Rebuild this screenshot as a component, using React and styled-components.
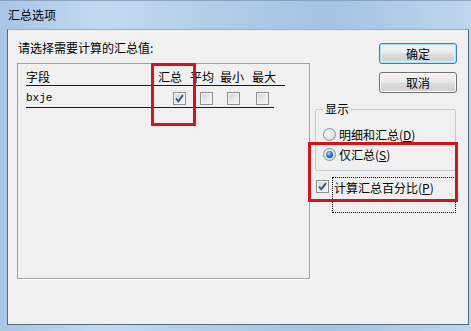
import React from 'react'
import styled, { createGlobalStyle } from 'styled-components'

const GlobalStyle = createGlobalStyle`
  html, body {
    margin: 0;
    padding: 0;
    overflow: hidden;
    background: #b7cfe9;
  }
  body {
    font-family: 'Noto Sans CJK SC', 'Noto Sans', sans-serif;
    font-size: 12px;
    color: #000;
  }
`

const Window = styled.div`
  position: relative;
  width: 471px;
  height: 331px;
  box-sizing: border-box;
  display: flex;
  flex-direction: column;
  border-top: 1px solid #8aa3c0;
  background: linear-gradient(90deg, #a8c5e5 0%, #c3d9f0 22%, #b2cce8 45%, #a5c2e3 70%, #bed5ee 100%);
`

const TitleBar = styled.div`
  height: 28px;
  padding: 6px 0 0 8px;
  box-sizing: border-box;
  line-height: 16px;
  font-size: 12px;
  color: #000;
`

const Client = styled.div`
  flex: 1;
  margin: 0 2px 6px 7px;
  box-sizing: border-box;
  display: flex;
  gap: 5px;
  padding: 10px 0 0 9px;
  background: #f0f0f0;
  border: 1px solid #55697f;
  border-top-color: #98aec6;
`

const LeftColumn = styled.div`
  width: 293px;
  display: flex;
  flex-direction: column;
`

const Prompt = styled.div`
  height: 16px;
  line-height: 16px;
  padding-left: 1px;
  margin-bottom: 7px;
`

const ListBox = styled.div`
  height: 216px;
  box-sizing: border-box;
  border: 1px solid #a0a0a0;
  box-shadow: 1px 1px 0 #ffffff;
  padding: 5px 0 0 8px;
`

const HeaderRow = styled.div`
  display: grid;
  grid-template-columns: 132px 32px 30px 32px 33px;
  width: 259px;
  height: 16px;
  line-height: 16px;
  border-bottom: 1px solid #1a1a1a;
`

const DataRow = styled.div`
  display: grid;
  grid-template-columns: 147px 27px 27px 29px 18px;
  align-items: center;
  width: 248px;
  height: 17px;
  padding-top: 4px;
  border-bottom: 1px solid #1a1a1a;
`

const FieldName = styled.span`
  font-family: 'Liberation Mono', 'DejaVu Sans Mono', monospace;
  font-size: 11px;
  line-height: 13px;
`

const RightColumn = styled.div`
  width: 142px;
  display: flex;
  flex-direction: column;
  align-items: flex-end;
`

const Button = styled.button`
  width: 78px;
  height: 21px;
  margin-top: ${(p) => p.$top}px;
  box-sizing: border-box;
  padding: 0;
  font-family: inherit;
  font-size: 12px;
  line-height: 18px;
  color: #000;
  border: 1px solid ${(p) => (p.$default ? '#3c7fb1' : '#707070')};
  border-radius: 3px;
  background: linear-gradient(#f2f2f2 0%, #ebebeb 48%, #dddddd 52%, #cfcfcf 100%);
  box-shadow: ${(p) =>
    p.$default ? 'inset 0 0 0 1px #a6e4fb, inset 0 0 0 2px #d8f2fc' : 'inset 0 0 0 1px #fbfbfb'};
`

const Group = styled.fieldset`
  align-self: flex-start;
  width: 141px;
  box-sizing: border-box;
  margin: 9px 0 0 0;
  padding: 0 0 6px 7px;
  border: 1px solid #c5cbd2;
  border-radius: 2px;
  min-width: 0;
`

const GroupTitle = styled.legend`
  padding: 0 2px;
  line-height: 14px;
`

const RadioRow = styled.label`
  display: flex;
  align-items: center;
  gap: 3px;
  height: 20px;
  margin-top: ${(p) => p.$top || 0}px;
`

const RadioDot = styled.span`
  width: 13px;
  height: 13px;
  box-sizing: border-box;
  border-radius: 50%;
  border: 1px solid #8e8f8f;
  background: radial-gradient(circle at 40% 40%, #fbfbfb 0%, #e3e3e3 60%, #cfcfcf 100%);
  display: flex;
  align-items: center;
  justify-content: center;

  &::after {
    content: '';
    display: ${(p) => (p.$on ? 'block' : 'none')};
    width: 7px;
    height: 7px;
    border-radius: 50%;
    background: radial-gradient(circle at 40% 35%, #bfe6ff 0%, #3c8ee0 35%, #124f9e 75%, #0a3777 100%);
  }
`

const Box = styled.span`
  width: 13px;
  height: 13px;
  flex: none;
  box-sizing: border-box;
  border: 1px solid #8e8f8f;
  background: linear-gradient(135deg, #cdd1d6 0%, #e9eaec 55%, #f7f7f7 100%);
  box-shadow: inset 0 0 0 1px #f4f4f4;
  display: flex;
  align-items: center;
  justify-content: center;
`

const PercentRow = styled.label`
  align-self: flex-start;
  display: flex;
  align-items: flex-start;
  margin: 6px 0 0 1px;
  padding-top: 3px;
`

const PercentText = styled.span`
  width: 124px;
  height: 36px;
  box-sizing: border-box;
  margin: -3px 0 0 3px;
  padding: 2px 1px;
  line-height: 16px;
  border: 1px dotted #000;
`

const Marker = styled.div`
  position: absolute;
  box-sizing: border-box;
  border: 3px solid #d0161c;
`

const Check = ({ on }) => (
  <Box>
    {on && (
      <svg width="9" height="9" viewBox="0 0 9 9">
        <path d="M1 4.6 L3.4 7.2 L8 1.2" fill="none" stroke="#3b4f8f" strokeWidth="1.9" />
      </svg>
    )}
  </Box>
)

const columns = ['汇总', '平均', '最小', '最大']

export default function App() {
  return (
    <>
      <GlobalStyle />
      <Window>
        <TitleBar>汇总选项</TitleBar>
        <Client>
          <LeftColumn>
            <Prompt>请选择需要计算的汇总值:</Prompt>
            <ListBox>
              <HeaderRow>
                <span>字段</span>
                {columns.map((c) => (
                  <span key={c}>{c}</span>
                ))}
              </HeaderRow>
              <DataRow>
                <FieldName>bxje</FieldName>
                <Check on />
                <Check />
                <Check />
                <Check />
              </DataRow>
            </ListBox>
          </LeftColumn>
          <RightColumn>
            <Button $default $top={3}>确定</Button>
            <Button $top={8}>取消</Button>
            <Group>
              <GroupTitle>显示</GroupTitle>
              <RadioRow $top={8}>
                <RadioDot />
                <span>明细和汇总(<u>D</u>)</span>
              </RadioRow>
              <RadioRow>
                <RadioDot $on />
                <span>仅汇总(<u>S</u>)</span>
              </RadioRow>
            </Group>
            <PercentRow>
              <Check on />
              <PercentText>计算汇总百分比(<u>P</u>)</PercentText>
            </PercentRow>
          </RightColumn>
        </Client>
        <Marker style={{ left: 151, top: 62, width: 45, height: 63 }} />
        <Marker style={{ left: 308, top: 141, width: 150, height: 60 }} />
      </Window>
    </>
  )
}
